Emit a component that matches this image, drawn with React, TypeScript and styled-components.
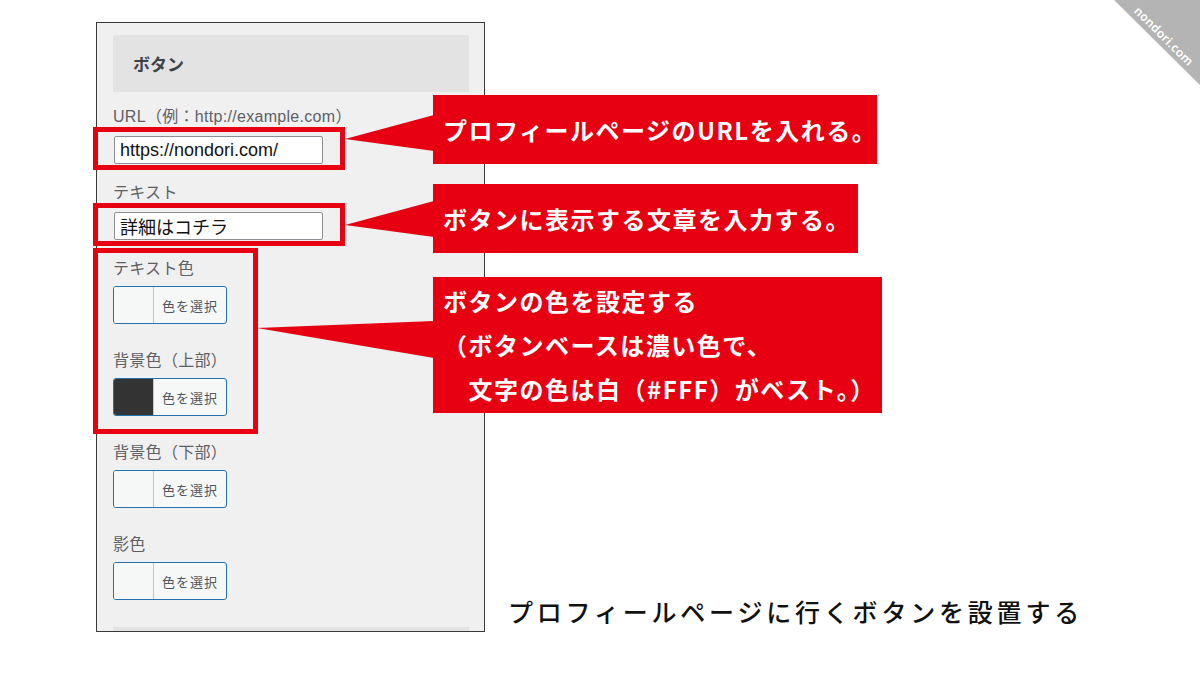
import React from 'react';
import styled, { createGlobalStyle } from 'styled-components';

const RED = '#e60012';
const JP = '"Noto Sans CJK JP", "Noto Sans", sans-serif';

const GlobalStyle = createGlobalStyle`
  html, body {
    margin: 0;
    padding: 0;
    background: #ffffff;
  }
  body {
    font-family: "Liberation Sans", "Noto Sans CJK JP", sans-serif;
  }
`;

const Stage = styled.div`
  position: relative;
  width: 1200px;
  height: 675px;
  box-sizing: border-box;
  padding: 22px 0 0 96px;
  display: flex;
  align-items: flex-start;
  overflow: hidden;
  background: #ffffff;
`;

const Panel = styled.div`
  width: 389px;
  height: 610px;
  box-sizing: border-box;
  border: 1px solid #3a3a3a;
  background: #f0f0f0;
  padding: 12px 15px 0 16px;
  overflow: hidden;
  display: flex;
  flex-direction: column;
`;

const SectionHeader = styled.div`
  flex-shrink: 0;
  height: 57px;
  display: flex;
  align-items: center;
  padding-left: 20px;
  background: #e3e3e3;
  font-family: ${JP};
  font-size: 17px;
  font-weight: 700;
  color: #3c434a;
  margin-bottom: 15px;
`;

const Field = styled.div<{ $gap: number }>`
  flex-shrink: 0;
  display: flex;
  flex-direction: column;
  align-items: flex-start;
  margin-bottom: ${(p) => p.$gap}px;
`;

const Label = styled.div`
  font-size: 16px;
  line-height: 20px;
  color: #5d6166;
  letter-spacing: 0.3px;
`;

const TextInput = styled.input`
  width: 209px;
  height: 28px;
  box-sizing: border-box;
  margin: 9px 0 0 1px;
  padding: 0 5px;
  border: 1px solid #8c8f94;
  border-radius: 2px;
  background: #ffffff;
  font-family: "Liberation Sans", "Noto Sans CJK JP", sans-serif;
  font-size: 18px;
  color: #111111;
  outline: none;
`;

const ColorButton = styled.div`
  width: 114px;
  height: 38px;
  box-sizing: border-box;
  margin-top: 7px;
  display: flex;
  border: 1px solid #2271b1;
  border-radius: 3px;
  background: #f6f7f7;
  overflow: hidden;
`;

const Swatch = styled.div<{ $color: string }>`
  width: 39px;
  flex-shrink: 0;
  border-right: 1px solid #c3c4c7;
  background: ${(p) => p.$color};
`;

const ButtonText = styled.div`
  flex: 1;
  display: flex;
  align-items: center;
  justify-content: center;
  font-family: ${JP};
  font-size: 13px;
  letter-spacing: 1px;
  color: #50575e;
`;

const Caption = styled.div`
  align-self: flex-end;
  margin: 0 0 47px 23px;
  font-family: ${JP};
  font-size: 25px;
  line-height: 34px;
  font-weight: 500;
  letter-spacing: 3.8px;
  color: #111111;
  white-space: nowrap;
`;

const Overlay = styled.div`
  position: absolute;
  inset: 0;
  pointer-events: none;
`;

const TailLayer = styled.svg`
  position: absolute;
  inset: 0;
`;

const Highlight = styled.div<{ $x: number; $y: number; $w: number; $h: number }>`
  position: absolute;
  left: ${(p) => p.$x}px;
  top: ${(p) => p.$y}px;
  width: ${(p) => p.$w}px;
  height: ${(p) => p.$h}px;
  box-sizing: border-box;
  border: 5px solid ${RED};
`;

const Callout = styled.div<{ $x: number; $y: number; $w: number; $h: number }>`
  position: absolute;
  left: ${(p) => p.$x}px;
  top: ${(p) => p.$y}px;
  width: ${(p) => p.$w}px;
  height: ${(p) => p.$h}px;
  box-sizing: border-box;
  padding-left: 10px;
  display: flex;
  flex-direction: column;
  justify-content: center;
  background: ${RED};
  color: #ffffff;
  font-family: ${JP};
  font-size: 24px;
  line-height: 44px;
  font-weight: 700;
  letter-spacing: 1.5px;
  white-space: nowrap;
`;

const Watermark = styled.svg`
  position: absolute;
  top: 0;
  right: 0;
`;

const colorFields = [
  { label: 'テキスト色', color: '#f6f7f7' },
  { label: '背景色（上部）', color: '#333333' },
  { label: '背景色（下部）', color: '#f6f7f7' },
  { label: '影色', color: '#f6f7f7' },
];

export default function App() {
  return (
    <>
      <GlobalStyle />
      <Stage>
        <Panel>
          <SectionHeader>ボタン</SectionHeader>
          <Field $gap={19}>
            <Label>URL（例：http://example.com）</Label>
            <TextInput readOnly defaultValue="https://nondori.com/" />
          </Field>
          <Field $gap={19}>
            <Label>テキスト</Label>
            <TextInput readOnly defaultValue="詳細はコチラ" />
          </Field>
          {colorFields.map((f) => (
            <Field key={f.label} $gap={27}>
              <Label>{f.label}</Label>
              <ColorButton>
                <Swatch $color={f.color} />
                <ButtonText>色を選択</ButtonText>
              </ColorButton>
            </Field>
          ))}
          <SectionHeader />
        </Panel>
        <Caption>プロフィールページに行くボタンを設置する</Caption>

        <Overlay>
          <TailLayer width="1200" height="675" viewBox="0 0 1200 675">
            <polygon points="345,139 434,115 434,151" fill={RED} />
            <polygon points="345,225 434,201 434,237" fill={RED} />
            <polygon points="257,328 434,321 434,358" fill={RED} />
          </TailLayer>
          <Highlight $x={93} $y={127} $w={252} $h={43} />
          <Highlight $x={93} $y={203} $w={252} $h={43} />
          <Highlight $x={93} $y={248} $w={165} $h={186} />
          <Callout $x={433} $y={95} $w={444} $h={69}>
            <span>プロフィールページのURLを入れる。</span>
          </Callout>
          <Callout $x={433} $y={184} $w={425} $h={69}>
            <span>ボタンに表示する文章を入力する。</span>
          </Callout>
          <Callout $x={433} $y={277} $w={449} $h={136}>
            <span>ボタンの色を設定する</span>
            <span>（ボタンベースは濃い色で、</span>
            <span>{'\u3000'}文字の色は白（#FFF）がベスト。）</span>
          </Callout>
          <Watermark width="86" height="86" viewBox="0 0 86 86">
            <polygon points="0,0 86,0 86,85" fill="#b4b4b4" />
            <text
              x="50"
              y="36"
              transform="rotate(45 50 36)"
              textAnchor="middle"
              dominantBaseline="central"
              fill="#ffffff"
              fontSize="12"
              fontWeight="600"
              fontFamily="'Noto Sans', sans-serif"
              letterSpacing="0.3"
            >
              nondori.com
            </text>
          </Watermark>
        </Overlay>
      </Stage>
    </>
  );
}
